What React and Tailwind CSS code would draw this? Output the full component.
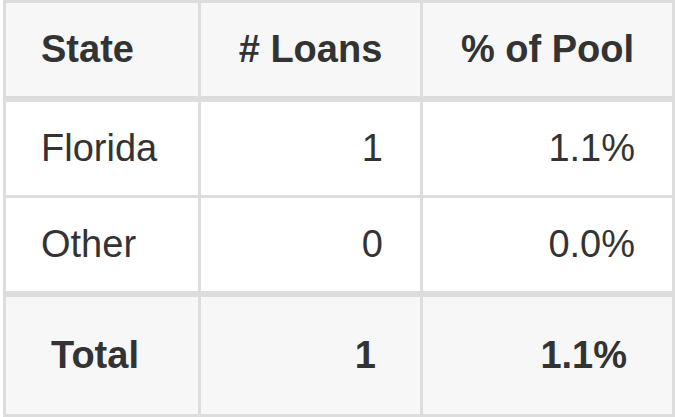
import React from 'react';

const rows = [
  { state: 'Florida', loans: '1', pct: '1.1%' },
  { state: 'Other', loans: '0', pct: '0.0%' },
];

export default function App() {
  return (
    <div className="w-[675px] h-[417px] bg-white pl-[3px] text-[#333333] font-['Liberation_Sans',Arial,sans-serif] text-[38px]">
      <table className="border-separate border-spacing-0 border-l-[3px] border-t-[3px] border-[#dddddd] w-[672px] table-fixed">
        <colgroup>
          <col className="w-[195px]" />
          <col className="w-[222px]" />
          <col className="w-[252px]" />
        </colgroup>
        <thead>
          <tr className="h-[99px] bg-[#f7f7f7]">
            <th className="border-r-[3px] border-b-[6px] border-[#dddddd] text-left font-bold pl-[35px] align-middle">State</th>
            <th className="border-r-[3px] border-b-[6px] border-[#dddddd] text-center font-bold align-middle">
              # Loans
            </th>
            <th className="border-r-[3px] border-b-[6px] border-[#dddddd] text-center font-bold align-middle">
              % of Pool
            </th>
          </tr>
        </thead>
        <tbody>
          {rows.map((r, i) => (
            <tr key={r.state} className={i === rows.length - 1 ? 'h-[99px] bg-white' : 'h-[96px] bg-white'}>
              <td className={`border-r-[3px] border-[#dddddd] pl-[35px] align-middle ${i === rows.length - 1 ? 'border-b-[6px]' : 'border-b-[3px]'}`}>
                {r.state}
              </td>
              <td className={`border-r-[3px] border-[#dddddd] pr-[37px] text-right align-middle ${i === rows.length - 1 ? 'border-b-[6px]' : 'border-b-[3px]'}`}>
                {r.loans}
              </td>
              <td className={`border-r-[3px] border-[#dddddd] pr-[37px] text-right align-middle ${i === rows.length - 1 ? 'border-b-[6px]' : 'border-b-[3px]'}`}>
                {r.pct}
              </td>
            </tr>
          ))}
          <tr className="h-[120px] bg-[#f7f7f7] font-bold">
            <td className="border-r-[3px] border-b-[3px] border-[#dddddd] pl-[45px] align-middle">Total</td>
            <td className="border-r-[3px] border-b-[3px] border-[#dddddd] pr-[44px] text-right align-middle">1</td>
            <td className="border-r-[3px] border-b-[3px] border-[#dddddd] pr-[45px] text-right align-middle">1.1%</td>
          </tr>
        </tbody>
      </table>
    </div>
  );
}
